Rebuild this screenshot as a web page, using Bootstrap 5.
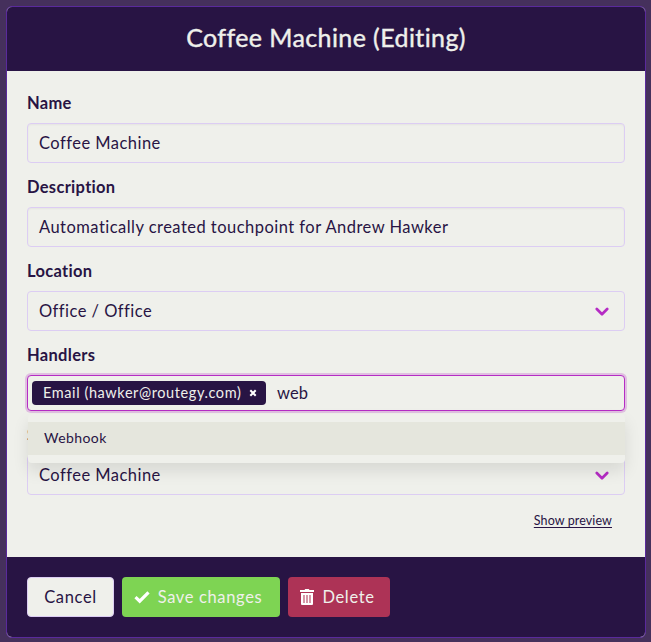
<!DOCTYPE html>
<html lang="en">
<head>
<meta charset="utf-8">
<meta name="viewport" content="width=device-width, initial-scale=1">
<title>Coffee Machine (Editing)</title>
<link href="https://cdn.jsdelivr.net/npm/bootstrap@5.3.0/dist/css/bootstrap.min.css" rel="stylesheet">
<style>
body{background:#45305c;color:#281444;font:16px/24px Lato,sans-serif;height:642px;overflow:hidden;padding:6px 5px 0 6px}
.edit-card{height:632px;border:1px solid #5a2a9c;border-radius:6px;overflow:hidden;background:#eff0eb;--bs-card-color:#281444}
.edit-head{height:64px;padding-bottom:4px;background:#281444;color:#eff0eb}
.edit-head h1{font-size:25px;line-height:32px;font-weight:400;letter-spacing:.4px;-webkit-text-stroke:.4px}
.edit-body{height:486px;padding:20px}
.edit-foot{height:80px;padding:20px;background:#281444}
.field{margin-bottom:12px}
.field .form-label{display:block;font-size:16.5px;font-weight:700;letter-spacing:.3px;margin-bottom:8px;line-height:24px}
.box{height:40px;border:1px solid #dccdf3;border-radius:4px;padding:0 11px;background:#eff0eb;color:#281444;font-size:16.5px;letter-spacing:.47px;box-shadow:inset 0 1px 2px rgba(40,20,68,.05)}
.pick{padding-right:15px;box-shadow:none}
.pick svg{margin-top:1px}
.tokens{height:36px;border-color:#b52cc4;padding:0 4px;box-shadow:0 0 0 2px rgba(181,44,196,.25)}
.token{height:24px;width:234px;background:#281444;color:#eff0eb;border-radius:4px;padding:0 8px 0 11px;font-size:14.5px;white-space:nowrap;letter-spacing:.59px}
.typed{margin-left:11px;letter-spacing:.1px}
.suggest{top:39px;left:1px;right:0;padding:8px 0;background:#eff0eb;border-radius:4px;box-shadow:0 8px 16px rgba(10,10,10,.1);z-index:3}
.suggest div{height:33px;line-height:31px;padding-left:16px;background:#e5e6dd;font-size:14px;letter-spacing:.42px}
.preview{font-size:12.5px;line-height:18px;color:#281444;margin:17px 13px 0 0;letter-spacing:.1px;text-underline-offset:2px}
.act{height:40px;border:1px solid transparent;border-radius:4px;padding:0;font-size:16.5px;letter-spacing:.65px;white-space:nowrap}
.act-cancel{width:87px;background:#eff0eb;border-color:#dccdf3;color:#281444}
.act-save{width:158px;background:#7ed453;color:#eff0eb;padding-right:6px}
.act-delete{width:102px;background:#ad3356;color:#eff0eb;padding-right:3px}
</style>
</head>
<body>
<main class="card edit-card">
  <header class="edit-head d-flex align-items-center justify-content-center"><h1 class="mb-0">Coffee Machine (Editing)</h1></header>
  <section class="edit-body d-flex flex-column">
    <div class="field"><label class="form-label">Name</label><div class="box d-flex align-items-center">Coffee Machine</div></div>
    <div class="field"><label class="form-label">Description</label><div class="box d-flex align-items-center">Automatically created touchpoint for Andrew Hawker</div></div>
    <div class="field"><label class="form-label">Location</label>
      <div class="box pick d-flex align-items-center justify-content-between"><span>Office / Office</span><svg width="14" height="10" viewBox="0 0 14 10"><path d="M1.8 2 7 7.2 12.2 2" fill="none" stroke="#b52cc4" stroke-width="2.7" stroke-linecap="round" stroke-linejoin="round"/></svg></div>
    </div>
    <div class="field"><label class="form-label">Handlers</label>
      <div class="position-relative">
        <div class="box tokens d-flex align-items-center">
          <div class="token d-flex align-items-center justify-content-between"><span>Email (hawker@routegy.com)</span><svg width="10" height="10" viewBox="0 0 10 10"><path d="m2.3 2.3 5.4 5.4m0-5.4L2.3 7.7" stroke="#fff" stroke-width="2"/></svg></div>
          <span class="typed">web</span>
        </div>
        <div class="suggest position-absolute"><div>Webhook</div></div>
      </div>
    </div>
    <div class="field mb-0"><label class="form-label">S</label>
      <div class="box pick d-flex align-items-center justify-content-between"><span>Coffee Machine</span><svg width="14" height="10" viewBox="0 0 14 10"><path d="M1.8 2 7 7.2 12.2 2" fill="none" stroke="#b52cc4" stroke-width="2.7" stroke-linecap="round" stroke-linejoin="round"/></svg></div>
    </div>
    <a href="#" class="preview align-self-end">Show preview</a>
  </section>
  <footer class="edit-foot d-flex gap-2">
    <button class="btn act act-cancel">Cancel</button>
    <button class="btn act act-save d-flex align-items-center justify-content-center"><svg class="me-2" width="16" height="14" viewBox="0 0 16 14"><path d="M1.5 7.2 5.7 11.2 14.5 2.4" fill="none" stroke="#fff" stroke-width="3.2"/></svg>Save changes</button>
    <button class="btn act act-delete d-flex align-items-center justify-content-center"><svg class="me-2" width="14" height="16" viewBox="0 0 14 16"><path d="M0 1h4.5L5.2 0h3.6l.7 1H14v2H0zM1 4h12v11q0 1-1 1H2q-1 0-1-1z" fill="#fff"/><path d="M4 6v8M7 6v8M10 6v8" stroke="#cf8599" stroke-width="1.7"/></svg>Delete</button>
  </footer>
</main>
<script src="https://cdn.jsdelivr.net/npm/bootstrap@5.3.0/dist/js/bootstrap.bundle.min.js"></script>
</body>
</html>
